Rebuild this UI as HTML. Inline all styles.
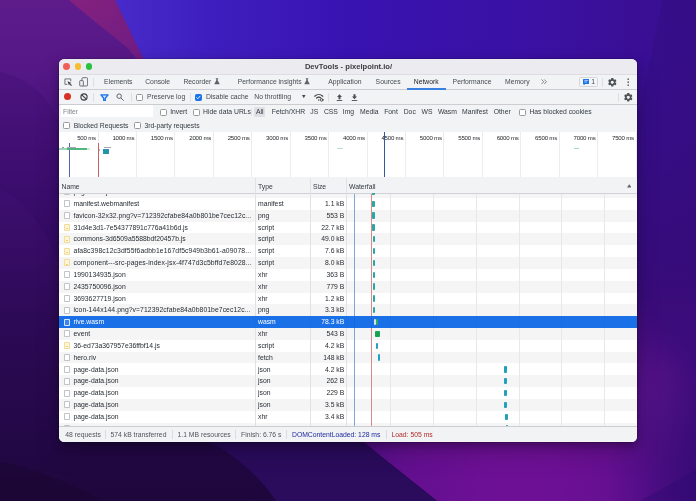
<!DOCTYPE html>
<html><head><meta charset="utf-8">
<style>
*{box-sizing:border-box;margin:0;padding:0}
html,body{width:696px;height:501px;overflow:hidden}
body{font-family:"Liberation Sans",sans-serif;font-size:6.8px;color:#303942;background:#3a1080;position:relative}
#bg{position:absolute;left:0;top:0;width:696px;height:501px}
#shadow{position:absolute;left:58.8px;top:58.5px;width:578.6px;height:383.4px;border-radius:5.5px;box-shadow:0 4px 9px rgba(0,0,0,.28),0 12px 26px rgba(0,0,0,.16),0 0 0 .5px rgba(0,0,0,.25)}
#win{position:absolute;left:58.8px;top:58.5px;width:578.6px;height:383.4px;border-radius:5.5px;overflow:hidden;background:#f1f3f4}
#in{will-change:transform;position:absolute;left:-58.8px;top:-58.5px;width:696px;height:501px}
#in>div,#in>span,#in>i,#in>svg{position:absolute}
.hl{height:.6px;background:#cbcdd1;left:59px;width:579px}
.txt{white-space:nowrap;line-height:8px}
/* title */
#title{left:59px;top:58.5px;width:579px;height:15.5px;background:#ecebf0}
#ttl{left:59px;width:579px;top:62.9px;text-align:center;font-weight:bold;font-size:7.6px;color:#3c3c40;white-space:nowrap;line-height:8px}
.tl{width:6.8px;height:6.8px;border-radius:50%;top:63.3px}
/* rows */
.row{position:absolute;left:59px;width:579px;height:11.83px;background:#fff;line-height:11.83px;white-space:nowrap;color:#272c33}
.row.even{background:#f5f5f5}
.row.sel{background:rgba(7,100,228,.92);color:#fff;width:579px;z-index:2}
.row span{position:absolute;top:0}
.row .n{left:14.5px}
.row .t{left:199px}
.row .s{right:293.7px}
.ic{position:absolute;left:4.8px;top:2.4px;width:6.2px;height:7px;border:.6px solid #c2c4c8;border-radius:.9px;background:#fff}
.ic.js{border-color:#f1dc98;background:#fdf6dc}
.ic.js:after{content:'';position:absolute;left:1.3px;top:3.2px;width:2px;height:.8px;background:#f0cd78}
.sel .ic{border-color:rgba(255,255,255,.8);background:#3b86ec}
.vl{width:1px;background:#e1e2e4}

.x{white-space:nowrap;line-height:8px;color:#464b52}
.cb{width:7px;height:7px;border:.6px solid #999;border-radius:1.4px;background:#fff;margin:-.2px 0 0 -.3px}
.vs{width:.6px;height:9px;background:#dcdee1}
.ft{white-space:nowrap;line-height:8px;color:#333a42;top:108.4px}
.ov{white-space:nowrap;line-height:8px;color:#25282c;top:133.9px;font-size:6.1px;letter-spacing:-.2px;text-align:right;width:40px}
.ovl{width:.6px;background:#ebecee;top:132px;height:45.4px}
.hd{white-space:nowrap;line-height:8px;color:#333a42;top:182.7px}
.wl{width:.6px;background:#e7e8ea;top:193.2px;height:233px}
.bar{position:absolute;border-radius:.9px;z-index:3}
.st{white-space:nowrap;line-height:8px;color:#50565d;top:430.8px}
</style></head><body>
<svg id="bg" width="696" height="501" viewBox="0 0 696 501">
<defs>
<linearGradient id="gb" x1="0" y1="0" x2="696" y2="0" gradientUnits="userSpaceOnUse">
<stop offset="0.16" stop-color="#482bca"/><stop offset="0.30" stop-color="#3e1ebe"/><stop offset="0.50" stop-color="#3913b2"/><stop offset="0.75" stop-color="#3a11a4"/><stop offset="1" stop-color="#390e8e"/></linearGradient>
<linearGradient id="gv" x1="0" y1="0" x2="0" y2="501" gradientUnits="userSpaceOnUse">
<stop offset="0.1" stop-color="#3a0c80" stop-opacity="0"/><stop offset="0.6" stop-color="#3a0c7c" stop-opacity="1"/><stop offset="1" stop-color="#3a0c7c" stop-opacity="1"/></linearGradient>
<linearGradient id="gl" x1="0" y1="0" x2="0" y2="501" gradientUnits="userSpaceOnUse">
<stop offset="0" stop-color="#5e1c8b"/><stop offset="0.15" stop-color="#541786"/><stop offset="0.40" stop-color="#3c0e6e"/><stop offset="0.65" stop-color="#2c0a55"/><stop offset="0.88" stop-color="#230846"/><stop offset="1" stop-color="#1e073b"/></linearGradient>
<linearGradient id="gm" x1="80" y1="0" x2="140" y2="60" gradientUnits="userSpaceOnUse">
<stop offset="0" stop-color="#83217e"/><stop offset="1" stop-color="#6f1c84"/></linearGradient>
<radialGradient id="gr" cx="520" cy="482" r="215" gradientUnits="userSpaceOnUse">
<stop offset="0" stop-color="#6e1096"/><stop offset="0.2" stop-color="#6c1095"/><stop offset="0.55" stop-color="#620f8f"/><stop offset="0.8" stop-color="#4d0e82"/><stop offset="1" stop-color="#3c0c7c"/></radialGradient>
<radialGradient id="gq"><stop offset="0" stop-color="#531487" stop-opacity=".75"/><stop offset="1" stop-color="#531487" stop-opacity="0"/></radialGradient>
<linearGradient id="gd" x1="0" y1="0" x2="0" y2="350" gradientUnits="userSpaceOnUse"><stop offset="0" stop-color="#20085a" stop-opacity=".16"/><stop offset=".7" stop-color="#20085a" stop-opacity=".14"/><stop offset="1" stop-color="#20085a" stop-opacity="0"/></linearGradient>
<radialGradient id="ge" cx="730" cy="480" r="125" gradientUnits="userSpaceOnUse"><stop offset="0" stop-color="#2a0a70" stop-opacity=".7"/><stop offset=".4" stop-color="#2a0a70" stop-opacity=".5"/><stop offset="1" stop-color="#2a0a70" stop-opacity="0"/></radialGradient>
</defs>
<rect width="696" height="501" fill="url(#gb)"/>
<rect width="696" height="501" fill="url(#gv)"/>
<rect x="340" y="300" width="356" height="201" fill="url(#gr)"/>
<path d="M0 0H115L143 58L160 100V442H363L380 455.500L437 501H0Z" fill="url(#gl)"/>
<path d="M69 0H115L143 58L150 75H146Q135 52 118 40Q95 22 69 0Z" fill="url(#gm)"/>
<path d="M663 0H696V350H638V115Z" fill="url(#gd)"/>
<ellipse cx="652" cy="405" rx="42" ry="60" fill="url(#gq)"/>
<rect x="560" y="300" width="136" height="201" fill="url(#ge)"/>
<path d="M696 470L640 501H696Z" fill="#2a0a70" opacity=".35"/>
<path d="M203 441H363L380 455.500L437 501H276Q262 480 240 462T203 441Z" fill="#2a0b5c"/>
<path d="M0 462Q50 472 103 501H0Z" fill="#19062f" opacity=".5"/>
<path d="M0 72Q35 80 52 108T59 150V260Q30 200 0 190Z" fill="#2a0860" opacity=".18"/>

</svg>
<div id="shadow"></div>
<div id="win"><div id="in">
<div id="title"></div>
<div class="tl" style="left:63.4px;background:#ee5f58"></div>
<div class="tl" style="left:74.5px;background:#f6be2f"></div>
<div class="tl" style="left:85.7px;background:#2ac33f"></div>
<div id="ttl">DevTools - pixelpoint.io/</div>
<div class="hl" style="top:73.9px;background:#dddde2"></div>
<div class="hl" style="top:88.9px"></div>
<div class="hl" style="top:104.2px"></div>
<!-- tabs row -->
<svg style="left:63.8px;top:78.2px" width="8.2" height="8.2" viewBox="0 0 16 16" fill="none" stroke="#5f6368" stroke-width="1.7"><path d="M13.2 6.500V1.800H1.800V12.500H6.500"/><path d="M6.800 6.300l3 8.200 1.300-3.300 3.400-1.300z" fill="#3c4043" stroke="none"/><path d="M10.800 10.800l4 4" stroke="#3c4043" stroke-width="2"/></svg>
<svg style="left:78.7px;top:76.800px" width="9.4" height="9.800" viewBox="0 0 17 18" fill="none" stroke="#5a5f64" stroke-width="1.600"><rect x="5.300" y="1.300" width="10.400" height="15.200" rx="1.600"/><rect x="1.200" y="6.600" width="6.600" height="9.900" rx="1.100" fill="#f1f3f4"/></svg>
<div class="vs" style="left:93.3px;top:77.5px"></div>
<div class="x" style="left:104.1px;top:78.3px">Elements</div>
<div class="x" style="left:145.2px;top:78.3px">Console</div>
<div class="x" style="left:183.4px;top:78.3px">Recorder</div>
<svg class="flask" style="left:213.6px;top:78.2px" width="6" height="6.6" viewBox="0 0 12 13"><path d="M3.5 0.5h5v1.3h-1v3.2l3.6 6.2c.3.7-.1 1.3-.8 1.3H1.700c-.7 0-1.100-.6-.8-1.300l3.600-6.200V1.800h-1z" fill="#5f6368"/></svg>
<div class="x" style="left:237.8px;top:78.3px">Performance insights</div>
<svg class="flask" style="left:304.200px;top:78.200px" width="6" height="6.6" viewBox="0 0 12 13"><path d="M3.5 0.5h5v1.3h-1v3.2l3.6 6.2c.3.7-.1 1.3-.8 1.3H1.700c-.7 0-1.100-.6-.8-1.300l3.600-6.200V1.800h-1z" fill="#5f6368"/></svg>
<div class="x" style="left:328.2px;top:78.3px">Application</div>
<div class="x" style="left:375.6px;top:78.3px">Sources</div>
<div class="x" style="left:413.8px;top:78.3px;color:#1f2226">Network</div>
<div style="left:407.2px;top:88.3px;width:38.5px;height:1.3px;background:#3a80e0"></div>
<div class="x" style="left:452.6px;top:78.3px">Performance</div>
<div class="x" style="left:505px;top:78.3px">Memory</div>
<svg style="left:541.2px;top:79.3px" width="6" height="5.5" viewBox="0 0 12 11" fill="none" stroke="#5f6368" stroke-width="1.5"><path d="M1 1l4.500 4.500L1 10M6.500 1l4.500 4.500L6.500 10"/></svg>
<div style="left:578.8px;top:76.6px;width:19.5px;height:10.200px;border:.6px solid #d4d6d9;border-radius:1.5px;background:#f3f5f7"></div>
<svg style="left:582.500px;top:78.600px" width="6.600" height="6.600" viewBox="0 0 12 12"><path d="M1 0h10a1 1 0 0 1 1 1v7a1 1 0 0 1-1 1H4l-3 3V9a1 1 0 0 1-1-1V1a1 1 0 0 1 1-1z" fill="#1a73e8"/><path d="M2.500 2.600h7M2.500 5.400h5" stroke="#fff" stroke-width="1.100"/></svg>
<div class="x" style="left:591.3px;top:78.3px">1</div>
<div class="vs" style="left:602.400px;top:77.500px"></div>
<svg class="gear" style="left:607.1px;top:76.5px" width="10.6" height="10.6" viewBox="0 0 24 24"><path fill="#4b5056" d="M19.140 12.940c.040-.300.060-.610.060-.940 0-.320-.020-.640-.070-.940l2.030-1.580a.490.490 0 0 0 .12-.61l-1.920-3.320a.488.488 0 0 0-.59-.22l-2.390.96c-.5-.38-1.030-.7-1.620-.94l-.36-2.540a.484.484 0 0 0-.48-.41h-3.840c-.24 0-.43.17-.47.41l-.36 2.540c-.59.24-1.130.57-1.620.94l-2.390-.96c-.22-.08-.47 0-.59.22L2.740 8.870c-.12.210-.08.470.12.610l2.030 1.580c-.05.300-.09.630-.09.940s.02.640.07.940l-2.030 1.580a.49.490 0 0 0-.12.610l1.920 3.320c.12.220.37.290.59.220l2.390-.96c.5.380 1.030.7 1.620.94l.36 2.540c.05.240.24.410.48.410h3.840c.24 0 .44-.17.470-.41l.36-2.540c.59-.24 1.130-.56 1.620-.94l2.390.96c.22.080.47 0 .59-.22l1.920-3.320c.12-.22.070-.47-.12-.61l-2.010-1.580zM12 15.600c-1.980 0-3.600-1.620-3.600-3.600s1.620-3.600 3.600-3.600 3.600 1.620 3.600 3.600-1.620 3.600-3.600 3.600z"/></svg>
<svg style="left:627.3px;top:77.7px" width="2.400" height="8.400" viewBox="0 0 4 14" fill="#5f6368"><circle cx="2" cy="2" r="1.400"/><circle cx="2" cy="7" r="1.400"/><circle cx="2" cy="12" r="1.400"/></svg>

<!-- toolbar row -->
<div style="left:64.1px;top:93.25px;width:7px;height:7px;border-radius:50%;background:#d93025"></div>
<svg style="left:79.6px;top:93.1px" width="8" height="8" viewBox="0 0 14 14" fill="none" stroke="#3c4043" stroke-width="2"><circle cx="7" cy="7" r="5.400"/><path d="M3.200 3.200l7.600 7.600"/></svg>
<div class="vs" style="left:93.2px;top:92.500px"></div>
<svg style="left:99.800px;top:93.700px" width="9" height="7.600" viewBox="0 0 18 15" fill="#cfe0fa" stroke="#1a73e8" stroke-width="2.600" stroke-linejoin="round"><path d="M1.800 1.800h14.400L10.600 8.400v4.800H7.400V8.400z"/></svg>
<svg style="left:115.800px;top:93.200px" width="8.400" height="8.400" viewBox="0 0 16 16" fill="none" stroke="#5f6368" stroke-width="1.900"><circle cx="6" cy="6" r="4.300"/><path d="M9.300 9.300l5.300 5.300"/></svg>
<div class="vs" style="left:131.100px;top:92.500px"></div>
<div class="cb" style="left:136.5px;top:94px"></div>
<div class="x" style="left:147px;top:93.25px">Preserve log</div>
<div class="vs" style="left:189.5px;top:92.500px"></div>
<div class="cb" style="left:195.2px;top:94px;background:#1a73e8;border-color:#1a73e8"></div>
<svg style="left:195.2px;top:94px" width="6.600" height="6.600" viewBox="0 0 12 12" fill="none" stroke="#fff" stroke-width="1.700"><path d="M2.600 6.200l2.400 2.400 4.500-5"/></svg>
<div class="x" style="left:205.9px;top:93.25px">Disable cache</div>
<div class="x" style="left:254.3px;top:93.25px">No throttling</div>
<svg style="left:302.3px;top:95.200px" width="3.600" height="3.200" viewBox="0 0 8 7"><path d="M0 0h8L4 7z" fill="#44494f"/></svg>
<svg style="left:314.1px;top:92.800px" width="10" height="9" viewBox="0 0 20 18" fill="none" stroke="#3c4043" stroke-width="2.300" stroke-linecap="round"><path d="M1.500 6.500c4.700-4.700 11.300-4.700 16 0"/><path d="M5 10.300c2.700-2.700 6.300-2.700 9 0"/><circle cx="9.500" cy="14" r="1.500" fill="#3c4043" stroke="none"/><circle cx="15.500" cy="13.800" r="2.600" fill="#f1f3f4" stroke="#3c4043" stroke-width="1.800"/></svg>
<div class="vs" style="left:328.4px;top:92.500px"></div>
<svg style="left:335.6px;top:93.500px" width="7" height="7.600" viewBox="0 0 14 15" fill="#4a4f55"><path d="M7 0.500L2 6h3v4.500h4V6h3z"/><rect x="1.500" y="12" width="11" height="1.800"/></svg>
<svg style="left:351.4px;top:93.500px" width="7" height="7.600" viewBox="0 0 14 15" fill="#4a4f55"><path d="M7 10.500L2 5h3V0.500h4V5h3z"/><rect x="1.500" y="12" width="11" height="1.800"/></svg>
<div class="vs" style="left:618.2px;top:92.500px"></div>
<svg class="gear" style="left:622.9px;top:91.9px" width="10.6" height="10.6" viewBox="0 0 24 24"><path fill="#4b5056" d="M19.140 12.940c.040-.300.060-.610.060-.940 0-.320-.020-.640-.070-.940l2.030-1.580a.490.490 0 0 0 .12-.61l-1.920-3.320a.488.488 0 0 0-.59-.22l-2.390.96c-.5-.38-1.030-.7-1.620-.94l-.36-2.540a.484.484 0 0 0-.48-.41h-3.840c-.24 0-.43.17-.47.41l-.36 2.540c-.59.24-1.130.57-1.620.94l-2.390-.96c-.22-.08-.47 0-.59.22L2.740 8.870c-.12.210-.08.470.12.610l2.030 1.580c-.05.300-.09.630-.09.940s.02.640.07.940l-2.030 1.580a.49.490 0 0 0-.12.610l1.920 3.320c.12.220.37.290.59.220l2.390-.96c.5.380 1.030.7 1.620.94l.36 2.540c.05.240.24.410.48.410h3.840c.24 0 .44-.17.470-.41l.36-2.540c.59-.24 1.130-.56 1.620-.94l2.390.96c.22.080.47 0 .59-.22l1.920-3.320c.12-.22.070-.47-.12-.61l-2.010-1.580zM12 15.600c-1.980 0-3.600-1.620-3.600-3.600s1.620-3.600 3.600-3.600 3.600 1.620 3.600 3.600-1.620 3.600-3.600 3.600z"/></svg>

<!-- filter rows -->
<div style="left:60.7px;top:105.1px;width:92px;height:11.7px;background:#fff"></div>
<div class="ft" style="left:63px;color:#80868b">Filter</div>
<div class="cb" style="left:160.1px;top:108.7px"></div>
<div class="ft" style="left:170.2px">Invert</div>
<div class="cb" style="left:192.8px;top:108.7px"></div>
<div class="ft" style="left:203px">Hide data URLs</div>
<div style="left:254px;top:106.800px;width:10.500px;height:9.800px;background:#dcdfe3;border-radius:1.500px"></div>
<div class="ft" style="left:256px">All</div>
<div class="vs" style="left:251.4px;top:107.500px;height:8.500px;background:#e0e2e5"></div>
<div class="ft" style="left:271.8px">Fetch/XHR</div>
<div class="ft" style="left:310.3px">JS</div>
<div class="ft" style="left:323.9px">CSS</div>
<div class="ft" style="left:342.8px">Img</div>
<div class="ft" style="left:360px">Media</div>
<div class="ft" style="left:384.2px">Font</div>
<div class="ft" style="left:403.7px">Doc</div>
<div class="ft" style="left:421.6px">WS</div>
<div class="ft" style="left:437.9px">Wasm</div>
<div class="ft" style="left:462.1px">Manifest</div>
<div class="ft" style="left:493.7px">Other</div>
<div class="cb" style="left:519.2px;top:108.7px"></div>
<div class="ft" style="left:529.4px">Has blocked cookies</div>
<div class="cb" style="left:63.5px;top:122.2px"></div>
<div class="ft" style="left:73.7px;top:121.6px">Blocked Requests</div>
<div class="cb" style="left:134.5px;top:122.2px"></div>
<div class="ft" style="left:144.4px;top:121.6px">3rd-party requests</div>

<!-- overview -->
<div style="left:59px;top:132px;width:579px;height:45.4px;background:#fff"></div>
<div class="ovl" style="left:97.53px"></div>
<div class="ov" style="left:55.93px">500 ms</div>
<div class="ovl" style="left:135.96px"></div>
<div class="ov" style="left:94.36px">1000 ms</div>
<div class="ovl" style="left:174.39px"></div>
<div class="ov" style="left:132.79px">1500 ms</div>
<div class="ovl" style="left:212.82px"></div>
<div class="ov" style="left:171.22px">2000 ms</div>
<div class="ovl" style="left:251.25px"></div>
<div class="ov" style="left:209.65px">2500 ms</div>
<div class="ovl" style="left:289.68px"></div>
<div class="ov" style="left:248.08px">3000 ms</div>
<div class="ovl" style="left:328.11px"></div>
<div class="ov" style="left:286.51px">3500 ms</div>
<div class="ovl" style="left:366.54px"></div>
<div class="ov" style="left:324.94px">4000 ms</div>
<div class="ovl" style="left:404.97px"></div>
<div class="ov" style="left:363.37px">4500 ms</div>
<div class="ovl" style="left:443.40px"></div>
<div class="ov" style="left:401.80px">5000 ms</div>
<div class="ovl" style="left:481.83px"></div>
<div class="ov" style="left:440.23px">5500 ms</div>
<div class="ovl" style="left:520.26px"></div>
<div class="ov" style="left:478.66px">6000 ms</div>
<div class="ovl" style="left:558.69px"></div>
<div class="ov" style="left:517.09px">6500 ms</div>
<div class="ovl" style="left:597.12px"></div>
<div class="ov" style="left:555.52px">7000 ms</div>
<div class="ovl" style="left:635.55px"></div>
<div class="ov" style="left:593.95px">7500 ms</div>
<!-- overview -->
<div style="left:68.9px;top:143.2px;width:.8px;height:34.2px;background:#5560c0"></div>
<div style="left:97.8px;top:143.2px;width:.8px;height:34.2px;background:#c46462"></div>

<div style="left:59px;top:148.2px;width:8px;height:1.6px;background:#9fd6b6"></div>
<div style="left:67px;top:148.2px;width:19.7px;height:1.6px;background:#52b681"></div>
<div style="left:86.7px;top:148.2px;width:3.500px;height:1.6px;background:#cfeadb"></div>
<div style="left:61.5px;top:146.800px;width:2px;height:.8px;background:#9a9aa5"></div>
<div style="left:66.6px;top:146.800px;width:9px;height:.8px;background:#a9a6bd"></div>
<div style="left:98.9px;top:148.500px;width:.9px;height:2px;background:#b5b5b5"></div>
<div style="left:104.3px;top:146.900px;width:6.500px;height:.8px;background:#a5a8b5"></div>
<div style="left:102.8px;top:148.900px;width:6.3px;height:5.500px;background:#2f8fca"></div>
<div style="left:104.1px;top:149.600px;width:3.600px;height:4.100px;background:#1d9a98"></div>
<div style="left:337.2px;top:148.200px;width:5.600px;height:1.300px;background:#b5e0cf"></div>
<div style="left:574px;top:148.200px;width:4.500px;height:1.300px;background:#9fd8d0"></div>
<div style="left:384px;top:132px;width:.9px;height:45.400px;background:#35589e"></div>
<div class="hl" style="top:177.5px"></div>
<!-- table header -->
<div style="left:59px;top:177.6px;width:579px;height:15.3px;background:#f1f3f4"></div>
<!-- rows area -->
<div style="left:59px;top:192.9px;width:579px;height:233.5px;background:#fff;overflow:hidden"><div style="position:absolute;left:-59px;top:-192.9px;width:696px;height:501px" id="rowsin">
<div class="row even" style="top:186.05px"><i class="ic doc"></i><span class="n">page-data.json</span><span class="t">xhr</span><span class="s">352 B</span></div>
<div class="row" style="top:197.88px"><i class="ic doc"></i><span class="n">manifest.webmanifest</span><span class="t">manifest</span><span class="s">1.1 kB</span></div>
<div class="row even" style="top:209.71px"><i class="ic doc"></i><span class="n" style="letter-spacing:0.057px">favicon-32x32.png?v=712392cfabe84a0b801be7cec12c...</span><span class="t">png</span><span class="s">553 B</span></div>
<div class="row" style="top:221.54px"><i class="ic js"></i><span class="n">31d4e3d1-7e54377891c776a41b6d.js</span><span class="t">script</span><span class="s">22.7 kB</span></div>
<div class="row even" style="top:233.37px"><i class="ic js"></i><span class="n">commons-3d6509a5588bdf20457b.js</span><span class="t">script</span><span class="s">49.0 kB</span></div>
<div class="row" style="top:245.20px"><i class="ic js"></i><span class="n" style="letter-spacing:0.099px">afa8c398c12c3df55f6adbb1e167df5c949b3b61-a09078...</span><span class="t">script</span><span class="s">7.6 kB</span></div>
<div class="row even" style="top:257.03px"><i class="ic js"></i><span class="n" style="letter-spacing:0.098px">component---src-pages-index-jsx-4f747d3c5bffd7e8028...</span><span class="t">script</span><span class="s">8.0 kB</span></div>
<div class="row" style="top:268.86px"><i class="ic doc"></i><span class="n">1990134935.json</span><span class="t">xhr</span><span class="s">363 B</span></div>
<div class="row even" style="top:280.69px"><i class="ic doc"></i><span class="n">2435750096.json</span><span class="t">xhr</span><span class="s">779 B</span></div>
<div class="row" style="top:292.52px"><i class="ic doc"></i><span class="n">3693627719.json</span><span class="t">xhr</span><span class="s">1.2 kB</span></div>
<div class="row even" style="top:304.35px"><i class="ic doc"></i><span class="n" style="letter-spacing:0.075px">icon-144x144.png?v=712392cfabe84a0b801be7cec12c...</span><span class="t">png</span><span class="s">3.3 kB</span></div>
<div class="row sel" style="top:316.18px"><i class="ic doc"></i><span class="n">rive.wasm</span><span class="t">wasm</span><span class="s">78.3 kB</span></div>
<div class="row even" style="top:328.01px"><i class="ic doc"></i><span class="n">event</span><span class="t">xhr</span><span class="s">543 B</span></div>
<div class="row" style="top:339.84px"><i class="ic js"></i><span class="n">36-ed73a367957e36ffbf14.js</span><span class="t">script</span><span class="s">4.2 kB</span></div>
<div class="row even" style="top:351.67px"><i class="ic doc"></i><span class="n">hero.riv</span><span class="t">fetch</span><span class="s">148 kB</span></div>
<div class="row" style="top:363.50px"><i class="ic doc"></i><span class="n">page-data.json</span><span class="t">json</span><span class="s">4.2 kB</span></div>
<div class="row even" style="top:375.33px"><i class="ic doc"></i><span class="n">page-data.json</span><span class="t">json</span><span class="s">262 B</span></div>
<div class="row" style="top:387.16px"><i class="ic doc"></i><span class="n">page-data.json</span><span class="t">json</span><span class="s">229 B</span></div>
<div class="row even" style="top:398.99px"><i class="ic doc"></i><span class="n">page-data.json</span><span class="t">json</span><span class="s">3.5 kB</span></div>
<div class="row" style="top:410.82px"><i class="ic doc"></i><span class="n">page-data.json</span><span class="t">xhr</span><span class="s">3.4 kB</span></div>
<div class="row even" style="top:422.65px"><i class="ic doc"></i><span class="n">page-data.json</span><span class="t">xhr</span><span class="s">408 B</span></div>
<div class="wl" style="position:absolute;left:390.10px"></div>
<div class="wl" style="position:absolute;left:432.90px"></div>
<div class="wl" style="position:absolute;left:475.70px"></div>
<div class="wl" style="position:absolute;left:518.50px"></div>
<div class="wl" style="position:absolute;left:561.30px"></div>
<div class="wl" style="position:absolute;left:604.10px"></div>
<div style="position:absolute;left:354.3px;top:193.2px;width:.8px;height:233px;background:#7ea6d8"></div>
<div style="position:absolute;left:371.1px;top:193.2px;width:.8px;height:233px;background:#d98a86"></div>
<div class="bar" style="left:372.2px;top:188.77px;width:2.4px;height:6.4px;background:#2ba6a3"></div>
<div class="bar" style="left:372.3px;top:200.60px;width:2.5px;height:6.4px;background:#2ba6a3"></div>
<div class="bar" style="left:372.3px;top:212.43px;width:2.5px;height:6.4px;background:#2ba6a3"></div>
<div class="bar" style="left:372.4px;top:224.26px;width:2.5px;height:6.4px;background:#2ba6a3"></div>
<div class="bar" style="left:372.5px;top:236.09px;width:2.5px;height:6.4px;background:#2ba6a3"></div>
<div class="bar" style="left:372.6px;top:247.92px;width:2.5px;height:6.4px;background:#2ba6a3"></div>
<div class="bar" style="left:372.6px;top:259.75px;width:2.5px;height:6.4px;background:#2ba6a3"></div>
<div class="bar" style="left:372.7px;top:271.57px;width:2.5px;height:6.4px;background:#2ba6a3"></div>
<div class="bar" style="left:372.8px;top:283.41px;width:2.5px;height:6.4px;background:#2ba6a3"></div>
<div class="bar" style="left:372.8px;top:295.24px;width:2.5px;height:6.4px;background:#2ba6a3"></div>
<div class="bar" style="left:372.9px;top:307.06px;width:2.5px;height:6.4px;background:#2ba6a3"></div>
<div class="bar" style="left:373.8px;top:318.90px;width:2.5px;height:6.4px;background:#cfe3f7"></div>
<div class="bar" style="left:376.1px;top:318.90px;width:2.4px;height:6.4px;background:#2fa860"></div>
<div class="bar" style="left:375.4px;top:330.73px;width:4.6px;height:6.4px;background:#1aa253"></div>
<div class="bar" style="left:375.8px;top:342.56px;width:2.3px;height:6.4px;background:#2a9fbf"></div>
<div class="bar" style="left:377.7px;top:354.39px;width:2.3px;height:6.4px;background:#22a2c6"></div>
<div class="bar" style="left:504.0px;top:366.22px;width:2.6px;height:6.4px;background:#23a1b8"></div>
<div class="bar" style="left:504.0px;top:378.05px;width:2.6px;height:6.4px;background:#23a1b8"></div>
<div class="bar" style="left:504.0px;top:389.88px;width:2.6px;height:6.4px;background:#23a1b8"></div>
<div class="bar" style="left:504.0px;top:401.70px;width:2.6px;height:6.4px;background:#23a1b8"></div>
<div class="bar" style="left:505.1px;top:413.54px;width:2.6px;height:6.4px;background:#23a1b8"></div>
<div class="bar" style="left:505.5px;top:425.37px;width:2.1px;height:6.4px;background:#23a1b8"></div>
</div></div>
<div class="hl" style="top:192.7px;background:#d0d2d5"></div>

<!-- header -->
<div class="hd" style="left:61.5px">Name</div>
<div class="hd" style="left:258px">Type</div>
<div class="hd" style="left:312.9px">Size</div>
<div class="hd" style="left:349px">Waterfall</div>
<svg style="left:626.8px;top:184.200px" width="4.600" height="3.800" viewBox="0 0 8 6"><path d="M0 6h8L4 0z" fill="#5f6368"/></svg>
<div class="vl" style="left:255px;top:178px;height:248.300px"></div>
<div class="vl" style="left:310px;top:178px;height:248.300px"></div>
<div class="vl" style="left:346px;top:178px;height:248.300px"></div>
<!-- status bar -->
<div style="left:59px;top:426.3px;width:579px;height:16px;background:#f1f3f4"></div>
<div class="hl" style="top:426.2px"></div>

<!-- status -->
<div class="st" style="left:65.3px">48 requests</div>
<div class="vs" style="left:105px;top:429.800px;background:#dadcdf"></div>
<div class="st" style="left:110.5px">574 kB transferred</div>
<div class="vs" style="left:171.5px;top:429.800px;background:#dadcdf"></div>
<div class="st" style="left:177.5px">1.1 MB resources</div>
<div class="vs" style="left:235px;top:429.800px;background:#dadcdf"></div>
<div class="st" style="left:241px">Finish: 6.76 s</div>
<div class="vs" style="left:286px;top:429.800px;background:#dadcdf"></div>
<div class="st" style="left:292px;color:#1f2a9f">DOMContentLoaded: 128 ms</div>
<div class="vs" style="left:386px;top:429.800px;background:#dadcdf"></div>
<div class="st" style="left:391.5px;color:#b52a2a">Load: 505 ms</div>
</div></div>
</body></html>
